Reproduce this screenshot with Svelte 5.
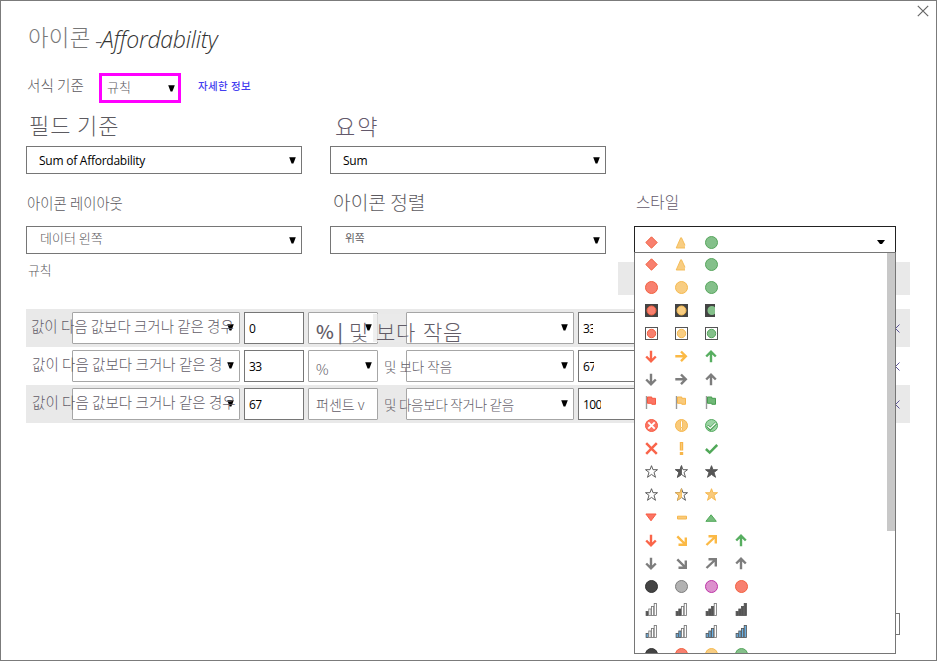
<script>
  const R = '#f8806f', RS = '#f0603f', Y = '#f8cd82', YS = '#f4b94f', G = '#84c08a', GS = '#57a55d', K = '#444', N = '#7d7d7d';
  const down = 'M6 .8v10.4M1.2 6.5L6 11.3l4.8-4.8';
  const up = 'M6 12.2V1.8M1.2 6.5L6 1.7l4.8 4.8';
  const right = 'M.3 6.3h10.4M6 1.5l4.8 4.8L6 11.1';
  const se = 'M2.3 2.3l8.2 8.2M10.8 3.5v7.3H3.5';
  const ne = 'M1.5 11l9-8.5M3.5 2.2h7.3v7.3';
  const starPath = 'M6.5 .7l1.5 4h4.5L9 7.4l1.5 4.9-4-2.9-4 2.9L4 7.4.5 4.7H5z';
  const dot = (f, s) => ({ t: 'dot', f, s });
  const arrow = (d, s) => ({ t: 'line', d, s, w: 2.4 });
  const first = [{ t: 'path', d: 'M6.5.8l5.7 5.7-5.7 5.7L.8 6.5z', f: R, s: RS }, { t: 'tri' }, dot(G, GS)];
  const icons = [
    first,
    [dot(R, RS), dot(Y, YS), dot(G, GS)],
    [{ t: 'dark', f: R, s: RS, w: 13 }, { t: 'dark', f: Y, s: YS, w: 13 }, { t: 'dark', f: G, s: GS, w: 10 }],
    [{ t: 'box', f: R, s: RS }, { t: 'box', f: Y, s: YS }, { t: 'box', f: G, s: GS }],
    [arrow(down, '#fa6549'), arrow(right, '#fbb945'), arrow(up, '#57ae60')],
    [arrow(down, N), arrow(right, N), arrow(up, N)],
    [{ t: 'flag', f: '#fb7464', s: '#f75b41' }, { t: 'flag', f: '#f9ca7b', s: '#f7b64b' }, { t: 'flag', f: '#70b877', s: '#489d50' }],
    [{ t: 'badx' }, { t: 'badwarn' }, { t: 'badok' }],
    [{ t: 'line', d: 'M1.2 1.2l10.6 10.6M11.8 1.2L1.2 11.8', s: '#f9644a', w: 2.5 }, { t: 'bang' }, { t: 'line', d: 'M.9 7l3.8 3.6L12.2 3', s: '#50a858', w: 2.5 }],
    [{ t: 'star', l: '#fff', r: '#fff', s: '#555' }, { t: 'star', l: '#555', r: '#fff', s: '#555' }, { t: 'star', l: '#555', r: '#555', s: '#555' }],
    [{ t: 'star', l: '#fff', r: '#fff', s: '#555' }, { t: 'star', l: '#f9ca7b', r: '#fff', s: '#555', ls: YS }, { t: 'star', l: '#f9ca7b', r: '#f9ca7b', s: '#f5b74d' }],
    [{ t: 'path', d: 'M.9 3h10.2L6 9.8z', f: '#fb7464', s: '#f75b41' }, { t: 'path', d: 'M2.5 5.2h9v2.8h-9z', f: '#f9ca7b', s: '#f5b74d' }, { t: 'path', d: 'M.9 10.3h10.4L6.1 3.8z', f: '#77bd7e', s: '#50a858' }],
    [arrow(down, '#fa6549'), arrow(se, '#fbb945'), arrow(ne, '#fbb945'), arrow(up, '#57ae60')],
    [arrow(down, N), arrow(se, N), arrow(ne, N), arrow(up, N)],
    [dot('#444', '#333'), dot('#b2b2b2', '#7d7d7d'), dot('#dc91cd', '#bd35a7'), dot(R, RS)],
    [1, 2, 3, 4].map((n) => ({ t: 'bars', n, f: '#555' })),
    [1, 2, 3, 4].map((n) => ({ t: 'bars', n, f: '#69b1e6' })),
    [dot('#444', '#333'), dot(R, RS), dot(Y, YS), dot(G, GS)]
  ];
  const rules = [
    { cls: 'r1', from: '0', to: '33', cond: '값이 다음 값보다 크거나 같은 경우' },
    { cls: 'r2', from: '33', to: '67', cond: '값이 다음 값보다 크거나 같은 경 ·' },
    { cls: 'r3', from: '67', to: '100', cond: '값이 다음 값보다 크거나 같은 경우' }
  ];
</script>

{#snippet caret()}
  <svg class="caret" width="7" height="7" viewBox="0 0 7 7"><path d="M.2.3h6.6L4.4 6.6H2.6z" fill="#000" /></svg>
{/snippet}

{#snippet icon(i)}
  <svg class="ico" width="13" height="13" viewBox="0 0 13 13">
    {#if i.t === 'dot'}
      <circle cx="6.5" cy="6.5" r="6" fill={i.f} stroke={i.s} />
    {:else if i.t === 'path'}
      <path d={i.d} fill={i.f} stroke={i.s} />
    {:else if i.t === 'tri'}
      <path d="M1.2 12L5.7 1.8h.8L10 9.3V12z" fill={Y} />
      <path d="M10 12H1.2L5.7 1.8h.8L10 9.3" fill="none" stroke={YS} stroke-width=".9" />
    {:else if i.t === 'line'}
      <path d={i.d} fill="none" stroke={i.s} stroke-width={i.w} />
    {:else if i.t === 'dark'}
      <rect width={i.w} height="13" fill={K} />
      <path d={i.w < 13 ? 'M10 3.2a4.5 4.5 0 1 0 0 6.6z' : 'M11 6.5a4.5 4.5 0 1 0-9 0a4.5 4.5 0 1 0 9 0z'} fill={i.f} stroke={i.w < 13 ? 'none' : i.s} />
    {:else if i.t === 'box'}
      <rect x=".5" y=".5" width="12" height="12" fill="#fff" stroke="#555" />
      <circle cx="6.5" cy="6.5" r="4.2" fill={i.f} stroke={i.s} />
    {:else if i.t === 'flag'}
      <path d="M1.5 0v13" stroke="#999" stroke-width="1.4" />
      <path d="M2.5 1h4.3v1.3h3.7v6H6.8V7.3H2.5z" fill={i.f} stroke={i.s} />
    {:else if i.t === 'badx'}
      <circle cx="6.5" cy="6.5" r="6" fill="#fb7464" stroke="#f75b41" />
      <path d="M3.3 3.3l6.4 6.4M9.7 3.3L3.3 9.7" stroke="#fff" stroke-width="1.9" />
    {:else if i.t === 'badwarn'}
      <circle cx="6.5" cy="6.5" r="6" fill="#f9ca7b" stroke="#f5b74d" />
      <path d="M6.5 2v6.3M6.5 9.1v2" stroke="#f5b74d" stroke-width="2.8" />
      <path d="M6.5 2.3v5.7M6.5 9.3v1.5" stroke="#fff" stroke-width="1.2" />
    {:else if i.t === 'badok'}
      <circle cx="6.5" cy="6.5" r="6" fill="#9cd4a4" stroke="#55aa60" />
      <path d="M2.3 6.8l3 3 5.6-5.6" fill="none" stroke="#489d50" stroke-width="3" />
      <path d="M2.6 7l2.7 2.5 5.3-5.2" fill="none" stroke="#fff" stroke-width="1.2" />
    {:else if i.t === 'bang'}
      <path d="M6.5 0v8.5M6.5 10v3" stroke="#f7b64b" stroke-width="3.4" />
      <path d="M6.5 1v6.8" stroke="#f9ca7b" />
    {:else if i.t === 'star'}
      <path d={starPath} fill={i.r} stroke={i.s} stroke-width=".95" />
      {#if i.l !== i.r}
        <path d="M6.5 .7L5 4.7H.5L4 7.4l-1.5 4.9 4-2.9z" fill={i.l} stroke={i.ls ?? i.s} stroke-width=".8" />
      {/if}
    {:else if i.t === 'bars'}
      {#each [[0.6, 8, 5], [3.3, 5.5, 7.5], [6, 3, 10], [8.7, 0, 13]] as [x, y, h], k}
        <rect x={x + 0.5} y={y + 0.5} width="2.2" height={h - 1} fill={k < i.n ? i.f : '#fff'} stroke={k < i.n ? '#555' : '#777'} stroke-width=".85" />
      {/each}
    {/if}
  </svg>
{/snippet}

<main class="dialog">
  <svg class="close" width="12" height="12" viewBox="0 0 12 12"><path d="M.8.8l10.4 10.4M11.2.8L.8 11.2" stroke="#666" stroke-width="1.2" /></svg>
  <header><span class="title">아이콘</span><span class="dash">-</span><em>Affordability</em></header>

  <div class="basis">
    <span class="basis-label">서식 기준</span>
    <div class="basis-select"><span>규칙</span>{@render caret()}</div>
    <a class="more">자세한 정보</a>
  </div>

  <div class="fields">
    <section>
      <h2 class="f1">필드 기준</h2>
      <div class="select"><span class="latin s1">Sum of Affordability</span>{@render caret()}</div>
    </section>
    <section>
      <h2 class="f2">요약</h2>
      <div class="select"><span class="latin s2">Sum</span>{@render caret()}</div>
    </section>
  </div>

  <div class="fields second">
    <section>
      <h2 class="f3">아이콘 레이아웃</h2>
      <div class="select"><span class="v3">데이터 왼쪽</span>{@render caret()}</div>
    </section>
    <section>
      <h2 class="f4">아이콘 정렬</h2>
      <div class="select"><span class="v4">위쪽</span>{@render caret()}</div>
    </section>
    <section class="style">
      <h2 class="f5">스타일</h2>
      <div class="picker">
        <div class="current">
          {#each first as i}{@render icon(i)}{/each}
          <svg class="drop" width="8" height="4" viewBox="0 0 8 4"><path d="M0 0h8L5 4H3z" /></svg>
        </div>
        <div class="menu">
          <div class="list">
            {#each icons as row}
              <div class="line">{#each row as i}{@render icon(i)}{/each}</div>
            {/each}
          </div>
          <div class="thumb"></div>
        </div>
      </div>
    </section>
  </div>

  <div class="rules-head"><span>규칙</span><div class="strip"></div></div>

  <div class="rules">
    {#each rules as r}
      <div class="rule {r.cls}">
        <div class="cell wide">{@render caret()}</div>
        <div class="cell num"><span>{r.from}</span></div>
        <div class="cell unit">{#if r.cls !== 'r3'}{@render caret()}{/if}</div>
        <div class="cell wide upper">{@render caret()}</div>
        <div class="cell num to"><span>{r.to}</span></div>
        <svg class="remove" width="9" height="9" viewBox="0 0 9 9"><path d="M.5.5l8 8M8.5.5l-8 8" stroke="#5b5296" /></svg>
        <span class="over cond">{r.cond}</span>
        {#if r.cls === 'r1'}
          <i class="patch"></i>
          <b class="over pct">% |</b><span class="over and">및</span><span class="over less">보다</span><span class="over small">작음</span>
        {:else if r.cls === 'r2'}
          <span class="over pct">%</span><span class="over and">및 보다 작음</span>
        {:else}
          <span class="over pct">퍼센트 v</span><span class="over and">및 다음보다 작거나 같음</span>
        {/if}
      </div>
    {/each}
  </div>
  <div class="button"></div>
</main>

<style>
  .dialog {
    position: relative;
    box-sizing: border-box;
    width: 937px;
    height: 661px;
    border: 1px solid #7b7b7b;
    padding-left: 25px;
    background: #fff;
    overflow: hidden;
    font-family: "Noto Sans CJK KR", sans-serif;
    font-weight: 300;
    color: #5c5a60;
    white-space: nowrap;
  }
  svg { display: block; flex: none; }
  .close { position: absolute; left: 916px; top: 4px; }
  header { display: flex; height: 72px; box-sizing: border-box; padding: 21px 0 0 2px; line-height: 28px; }
  .title { width: 67px; font-size: 22.3px; letter-spacing: .3px; color: #777; font-weight: 200; }
  .dash { width: 6px; font-size: 22px; line-height: 34px; }
  em { font: italic 300 23px/35px "Open Sans", sans-serif; letter-spacing: -.22px; color: #333; }

  .basis { display: flex; height: 30px; }
  .basis-label { padding-left: 1px; font-size: 14.6px; line-height: 24px; box-sizing: border-box; width: 73px; }
  .basis-select { display: flex; box-sizing: border-box; width: 82px; height: 30px; border: 3px solid #f0f; padding: 0 3px 0 5px; justify-content: space-between; align-items: center; font-size: 13px; line-height: 22px; }
  .basis-select span { margin-top: -2px; }
  .more { margin-left: 17px; font-size: 10.5px; line-height: 26px; letter-spacing: .4px; font-weight: 500; color: #433df0; }

  .fields { display: flex; gap: 28px; height: 71px; }
  section { width: 276px; }
  h2 { margin: 0; height: 43px; font-weight: 300; }
  .second { height: 80px; }
  .second h2 { height: 52px; }
  .f1, .f2 { font-size: 22px; line-height: 43px; padding-left: 3px; letter-spacing: .9px; }
  .f2 { padding-left: 5px; color: #63596b; line-height: 45px; letter-spacing: 2px; }
  .second .f3 { font-size: 14.4px; line-height: 57px; padding-left: 1px; }
  .second .f4 { font-size: 19.2px; line-height: 57px; padding-left: 3px; }
  .second .f5 { font-size: 15.6px; line-height: 54px; padding-left: 2px; color: #63596b; }
  .select { display: flex; box-sizing: border-box; width: 276px; height: 28px; border: 1px solid #767676; padding: 0 5px 0 12px; justify-content: space-between; align-items: center; font-size: 13px; line-height: 22px; }
  .latin { font: 400 12px/28px "Open Sans", sans-serif; letter-spacing: -.25px; color: #000; padding-top: 1px; }
  .v3 { margin-top: -4px; padding-left: 1px; }
  .v4 { margin-top: -4px; padding-left: 2px; font-size: 10.7px; font-weight: 400; }

  .style { width: 262px; }
  .picker { position: relative; z-index: 5; width: 262px; }
  .current { display: flex; gap: 17px; box-sizing: border-box; height: 27px; padding: 9px 10px 0; background: #fff; border: 1px solid #222; border-bottom: 0; }
  .drop { margin: 4px 0 0 auto; }
  .menu { position: absolute; top: 26px; left: 0; box-sizing: border-box; width: 262px; height: 402px; border: 1px solid #767676; background: #fff; display: flex; }
  .list { flex: 1; height: 400px; overflow: hidden; }
  .line { display: flex; align-items: center; gap: 17px; height: 22.98px; padding-left: 10px; }
  .thumb { width: 8px; height: 278px; background: #c8c8c8; }

  .rules-head { display: flex; height: 55px; box-sizing: border-box; padding: 8px 0 14px 2px; font-size: 12.8px; line-height: 16px; justify-content: space-between; width: 884px; }
  .strip { width: 292px; height: 33px; background: #e9e9e9; }
  .rules { width: 884px; }
  .rule { position: relative; display: flex; gap: 4px; height: 38px; box-sizing: border-box; padding: 3px 0 3px 46px; }
  .r1, .r3 { background: #e9e9e9; }
  .cell { display: flex; justify-content: flex-end; align-items: center; box-sizing: border-box; height: 32px; border: 1px solid #a6a6a6; border-radius: 1px; background: #fff; padding: 0 5px 1px 0; }
  .wide { width: 168px; }
  .unit { width: 70px; }
  .upper { margin-left: 24px; }
  .num { width: 60px; border-color: #767676; border-radius: 0; justify-content: flex-start; padding: 1px 0 0 4px; font: 400 12px/30px "Open Sans", sans-serif; letter-spacing: -.6px; color: #000; }
  .to span { width: 11px; overflow: hidden; }
  .r1 .to span { width: 10px; }
  .r3 .to span { width: 18px; }
  .remove { position: absolute; left: 865px; top: 15px; }
  .over { position: absolute; color: #625c67; }
  .cond { left: 5px; top: 4px; width: 204px; overflow: hidden; font-size: 14.5px; line-height: 25px; }
  .r2 .cond, .r3 .cond { left: 6px; letter-spacing: .05px; width: 206px; }
  .patch { position: absolute; left: 347px; top: 5px; width: 32px; height: 28px; background: #e9e9e9; opacity: .75; }
  .pct { left: 290px; top: 12px; font-size: 14px; line-height: 20px; }
  .and { left: 358px; top: 6px; font-size: 13.5px; line-height: 26px; }
  .r1 .pct { font-weight: 500; font-size: 19px; letter-spacing: -.3px; }
  .r1 .and, .less, .small { font-size: 21px; top: 9px; line-height: 26px; letter-spacing: .6px; }
  .r1 .and { left: 323px; }
  .less { left: 350px; }
  .small { left: 397px; }
  .r3 .pct { top: 9px; }
  .r3 .and { left: 358px; letter-spacing: -.25px; }
  .button { position: absolute; left: 820px; top: 612px; box-sizing: border-box; width: 79px; height: 22px; border: 1px solid #767676; }
</style>
